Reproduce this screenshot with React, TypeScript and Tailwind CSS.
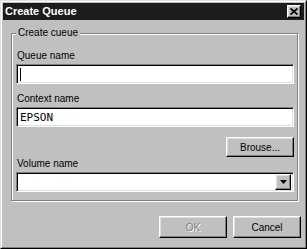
import React from 'react';

const raised =
  'border border-t-white border-l-white border-r-black border-b-black shadow-[inset_-1px_-1px_0_#808080,inset_1px_1px_0_#dfdfdf] bg-[#c0c0c0]';
const sunken =
  'border border-t-[#808080] border-l-[#808080] border-r-white border-b-white shadow-[inset_1px_1px_0_#000,inset_-1px_-1px_0_#dfdfdf] bg-white';

function Field({ label, className = '', children }: { label: string; className?: string; children?: React.ReactNode }) {
  return (
    <div className={className}>
      <div className="h-[12px] leading-[12px] pl-[1px] mb-[2px]">{label}</div>
      <div className={`${sunken} h-[20px] flex items-center pl-[3px]`}>{children}</div>
    </div>
  );
}

function Button({ label, disabled = false }: { label: string; disabled?: boolean }) {
  return (
    <div className={`${raised} w-[68px] h-[22px] flex items-center justify-center`}>
      <span className={disabled ? 'text-[#808080] [text-shadow:1px_1px_0_#fff]' : 'text-black'}>{label}</span>
    </div>
  );
}

export default function App() {
  return (
    <div className="w-[307px] h-[249px] bg-[#c0c0c0] border border-t-[#dfdfdf] border-l-[#dfdfdf] border-r-black border-b-black font-['Liberation_Sans',Arial,sans-serif] text-[10px] text-black">
      <div className="w-full h-full border border-t-white border-l-white border-r-[#808080] border-b-[#808080] p-[1px] flex flex-col">
        {/* title bar */}
        <div className="h-[17px] bg-[#1c1c1c] flex items-center justify-between pl-[2px] pr-[3px]">
          <span className="text-white font-bold text-[11px] leading-[17px]">Create Queue</span>
          <div className={`${raised} w-[14px] h-[13px] flex items-center justify-center`}>
            <svg width="8" height="7" viewBox="0 0 8 7">
              <path d="M0.5 0.5 L7.5 6.5 M7.5 0.5 L0.5 6.5" stroke="#000" strokeWidth="1.8" />
            </svg>
          </div>
        </div>

        {/* group box */}
        <div className="relative mt-[13px] ml-[8px] w-[287px] border border-[#808080] shadow-[inset_1px_1px_0_#fff,1px_1px_0_#fff] pt-[16px] pl-[4px] pr-[3px] pb-[8px]">
          <span className="absolute top-[-7px] left-[4px] px-[2px] bg-[#c0c0c0] leading-[12px]">Create cueue</span>

          <Field label="Queue name">
            <span className="w-[1px] h-[13px] bg-black" />
          </Field>

          <Field label="Context name" className="mt-[9px]">
            <span className="font-['DejaVu_Sans_Mono',monospace] text-[11px] leading-[13px]">EPSON</span>
          </Field>

          <div className="flex justify-end mt-[10px]">
            <div className={`${raised} w-[68px] h-[20px] flex items-center justify-center`}>Brouse...</div>
          </div>

          <div className="mt-[1px]">
            <div className="h-[12px] leading-[12px] pl-[1px] mb-[2px]">Volume name</div>
            <div className={`${sunken} h-[20px] flex items-center justify-end p-[2px]`}>
              <div className={`${raised} w-[16px] h-[16px] flex items-center justify-center`}>
                <svg width="7" height="4" viewBox="0 0 7 4">
                  <path d="M0 0 H7 L3.5 4 Z" fill="#000" />
                </svg>
              </div>
            </div>
          </div>
        </div>

        {/* buttons */}
        <div className="flex justify-end gap-[6px] mt-[15px] pr-[3px]">
          <Button label="OK" disabled />
          <Button label="Cancel" />
        </div>
      </div>
    </div>
  );
}
